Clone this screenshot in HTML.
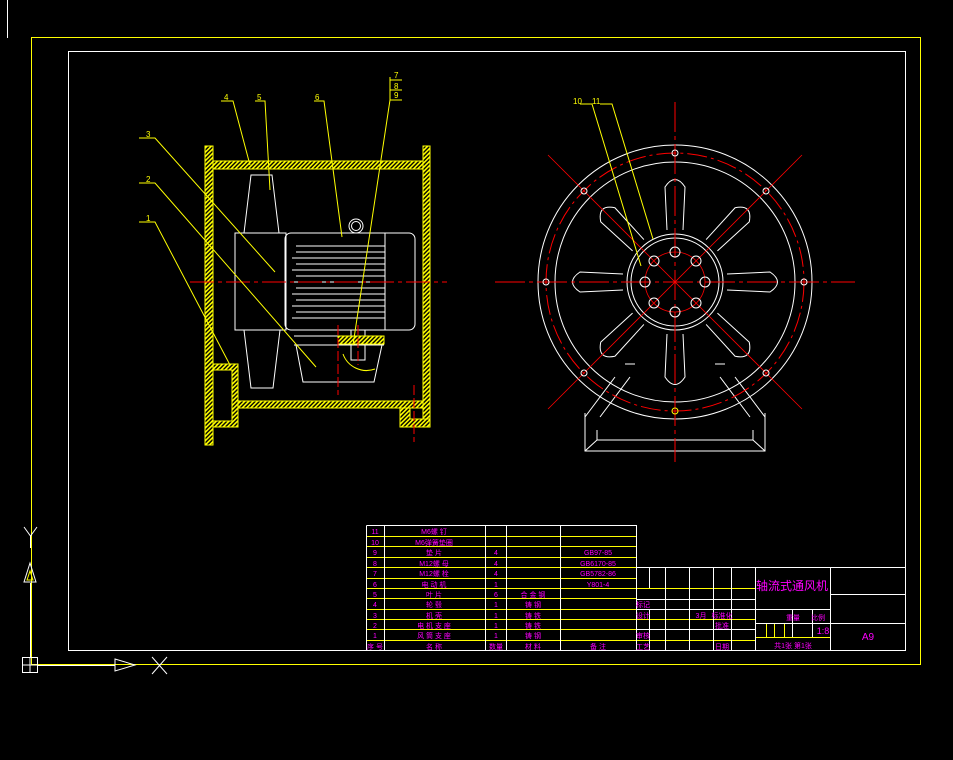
<!DOCTYPE html>
<html><head><meta charset="utf-8"><style>
html,body{margin:0;padding:0;background:#000;}
svg{display:block}
text{font-family:"Liberation Sans","Noto Sans CJK SC",sans-serif;}
</style></head><body>
<svg width="953" height="760" viewBox="0 0 953 760" xmlns="http://www.w3.org/2000/svg">
<defs>
<pattern id="h" width="3" height="3" patternUnits="userSpaceOnUse" patternTransform="rotate(45)">
<rect width="3" height="3" fill="#000"/><rect width="1.6" height="3" fill="#ff0"/></pattern>
</defs>
<rect width="953" height="760" fill="#000"/>
<line x1="7.5" y1="0" x2="7.5" y2="38" stroke="#fff"/>
<rect x="31.5" y="37.5" width="889" height="627" fill="none" stroke="#ff0"/>
<rect x="68.5" y="51.5" width="837" height="599" fill="none" stroke="#fff"/>

<!-- UCS icon -->
<g stroke="#fff" fill="none">
<rect x="22.5" y="657.5" width="15" height="15"/><line x1="30" y1="657" x2="30" y2="672"/><line x1="22" y1="665" x2="37" y2="665"/>
<line x1="37" y1="665.5" x2="115" y2="665.5"/>
<path d="M115 659 L135 665 L115 671 Z"/>
<line x1="30.5" y1="657" x2="30.5" y2="583"/>
<path d="M24 582 L30 563 L36 582 Z"/>
<line x1="152" y1="657" x2="167" y2="674"/><line x1="167" y1="657" x2="152" y2="674"/>
<path d="M24 527 L30.5 536 L37 527 M30.5 536 V548"/>
</g>
<g stroke="#ff0" fill="none"><path d="M27 580 L30 571 L33 580 Z"/></g>

<!-- LEFT VIEW -->
<g>
<rect x="205" y="146" width="8" height="299" fill="url(#h)" stroke="#ff0"/>
<rect x="213" y="161" width="210" height="8" fill="url(#h)" stroke="#ff0"/>
<rect x="423" y="146" width="7" height="281" fill="url(#h)" stroke="#ff0"/>
<rect x="238" y="401" width="185" height="7" fill="url(#h)" stroke="#ff0"/>
<path d="M213 364 H238 V427 H213 V421 H232 V370 H213 Z" fill="url(#h)" stroke="#ff0"/>
<path d="M400 408 H410 V419 H430 V427 H400 Z" fill="url(#h)" stroke="#ff0"/>
<g stroke="#fff" fill="none" stroke-width="1">
<path d="M251 175 H272 L279 233 H244 Z"/>
<path d="M244 330 H280 L273 388 H251 Z"/>
<rect x="235" y="233" width="51" height="97"/>
<rect x="285" y="233" width="130" height="97" rx="6"/>
<line x1="385" y1="233" x2="385" y2="330"/>
<circle cx="356" cy="226" r="7"/><circle cx="356" cy="226" r="4.5"/>
<path d="M296 246 H385 M296 252 H385 M292 258 H385 M296 264 H385 M292 270 H385 M296 276 H385 M292 282 H385 M296 288 H385 M292 294 H385 M296 300 H385 M292 306 H385 M296 312 H385 M292 318 H385"/>
<path d="M294 336 H384 M294 345 H384 M296 345 L303 382 H374 L382 345"/>
<rect x="351" y="330" width="14" height="30"/>
<path d="M343 354 A25 25 0 0 0 375 369" stroke="#ff0"/>
</g>
<rect x="338" y="336" width="46" height="8" fill="url(#h)" stroke="#ff0"/>
<line x1="190" y1="282" x2="447" y2="282" stroke="#f00" stroke-dasharray="24 4 4 4"/>
<line x1="338" y1="325" x2="338" y2="395" stroke="#f00" stroke-dasharray="10 3"/>
<line x1="358" y1="325" x2="358" y2="365" stroke="#f00" stroke-dasharray="10 3"/>
<line x1="414" y1="385" x2="414" y2="442" stroke="#f00" stroke-dasharray="10 3"/>
<!-- leaders -->
<g stroke="#ff0" fill="none">
<path d="M139 222 H155 L230 365"/>
<path d="M139 183 H155 L316 367"/>
<path d="M139 138 H155 L275 272"/>
<path d="M221 101 H233 L250 165"/>
<path d="M255 101 H265 L270 190"/>
<path d="M314 101 H324 L342 237"/>
<path d="M390 77 V100 L353 345 M390 80 H402 M390 90 H402 M390 100 H402"/>
</g>
<g fill="#ff0" font-size="8">
<text x="146" y="221">1</text><text x="146" y="182">2</text><text x="146" y="137">3</text>
<text x="224" y="100">4</text><text x="257" y="100">5</text><text x="315" y="100">6</text>
<text x="394" y="78">7</text><text x="394" y="89">8</text><text x="394" y="98">9</text>
<text x="573" y="104">10</text><text x="592" y="104">11</text>
</g>
</g>

<!-- RIGHT VIEW -->
<g transform="translate(675,282)">
<g stroke="#fff" fill="none">
<path d="M-130 163 V201 H50 V163 M-118 180 V190 H38 V180 M-130 201 L-118 190 M50 201 L38 190" transform="translate(40,-32)"/>
<path d="M-60 95 L-90 135 M-45 95 L-75 135 M60 95 L90 135 M45 95 L75 135 M-50 82 H-40 M40 82 H50"/>
<circle r="137"/><circle r="120"/>
<circle r="48"/><circle r="44"/>
</g>
<circle r="129" stroke="#f00" fill="none" stroke-dasharray="20 4 3 4"/>
<g id="bl" stroke="#fff" fill="none"><path d="M-8 -52 L-10 -95 Q0 -110 10 -95 L8 -52"/></g>
<use href="#bl" transform="rotate(45)"/><use href="#bl" transform="rotate(90)"/><use href="#bl" transform="rotate(135)"/>
<use href="#bl" transform="rotate(180)"/><use href="#bl" transform="rotate(225)"/><use href="#bl" transform="rotate(270)"/><use href="#bl" transform="rotate(315)"/>
<g stroke="#f00">
<line x1="-180" y1="0" x2="180" y2="0" stroke-dasharray="30 4 4 4"/>
<line x1="0" y1="-180" x2="0" y2="180" stroke-dasharray="30 4 4 4"/>
<line x1="-127" y1="-127" x2="127" y2="127" stroke-width="0.8"/>
<line x1="127" y1="-127" x2="-127" y2="127" stroke-width="0.8"/>
<circle r="30" fill="none" stroke-width="0.8"/>
</g>
<g stroke="#fff" fill="none">
<circle cx="0" cy="-30" r="5"/><circle cx="0" cy="30" r="5"/><circle cx="-30" cy="0" r="5"/><circle cx="30" cy="0" r="5"/>
<circle cx="-21" cy="-21" r="5"/><circle cx="21" cy="-21" r="5"/><circle cx="-21" cy="21" r="5"/><circle cx="21" cy="21" r="5"/>
<circle cx="0" cy="-129" r="3"/><circle cx="0" cy="129" r="3" stroke="#ff0"/><circle cx="-129" cy="0" r="3"/><circle cx="129" cy="0" r="3"/>
<circle cx="-91" cy="-91" r="3"/><circle cx="91" cy="-91" r="3"/><circle cx="-91" cy="91" r="3"/><circle cx="91" cy="91" r="3"/>
</g>
<g stroke="#ff0" fill="none"><path d="M-95 -178 H-83 L-34 -16 M-75 -178 H-63 L-22 -43"/></g>
</g>

<!-- PARTS TABLE -->
<g stroke="#ff0">
<line x1="366" y1="536.5" x2="636" y2="536.5"/><line x1="366" y1="546.5" x2="636" y2="546.5"/>
<line x1="366" y1="557.5" x2="636" y2="557.5"/><line x1="366" y1="567.5" x2="636" y2="567.5"/>
<line x1="366" y1="578.5" x2="636" y2="578.5"/><line x1="366" y1="588.5" x2="755" y2="588.5"/>
<line x1="366" y1="598.5" x2="636" y2="598.5"/><line x1="366" y1="609.5" x2="636" y2="609.5"/>
<line x1="366" y1="619.5" x2="755" y2="619.5"/><line x1="366" y1="629.5" x2="636" y2="629.5"/>
<line x1="366" y1="640.5" x2="755" y2="640.5"/><line x1="755" y1="637.5" x2="830" y2="637.5"/>
<line x1="766.5" y1="623" x2="766.5" y2="637"/><line x1="774.5" y1="623" x2="774.5" y2="637"/><line x1="784.5" y1="623" x2="784.5" y2="637"/>
</g>
<g stroke="#fff" fill="none">
<path d="M366.5 525.5 H636.5 V650 M366.5 525.5 V650 M384.5 525 V650 M485.5 525 V650 M506.5 525 V650 M560.5 525 V650"/>
<path d="M636 567.5 H906 M649.5 567 V588 M665.5 567 V650 M689.5 567 V650 M713.5 567 V650 M731.5 567 V650 M755.5 567 V650 M830.5 567 V650"/>
<path d="M636 599.5 H755 M636 609.5 H755 M636 629.5 H755 M649.5 609 V650 M830 594.5 H906 M755 609.5 H830 M755 623.5 H906 M792.5 609 V637 M812.5 609 V637"/>
</g>
<g fill="#f0f" font-size="7" text-anchor="middle">
<text x="375" y="534">11</text><text x="375" y="545">10</text><text x="375" y="555">9</text><text x="375" y="566">8</text>
<text x="375" y="576">7</text><text x="375" y="587">6</text><text x="375" y="597">5</text><text x="375" y="607">4</text>
<text x="375" y="618">3</text><text x="375" y="628">2</text><text x="375" y="638">1</text><text x="375" y="649">序 号</text>
<text x="434" y="534">M6螺 钉</text><text x="434" y="545">M6弹簧垫圈</text><text x="434" y="555">垫 片</text><text x="434" y="566">M12螺 母</text>
<text x="434" y="576">M12螺 栓</text><text x="434" y="587">电 动 机</text><text x="434" y="597">叶 片</text><text x="434" y="607">轮 毂</text>
<text x="434" y="618">机 壳</text><text x="434" y="628">电 机 支 座</text><text x="434" y="638">风 筒 支 座</text><text x="434" y="649">名 称</text>
<text x="496" y="555">4</text><text x="496" y="566">4</text><text x="496" y="576">4</text><text x="496" y="587">1</text>
<text x="496" y="597">6</text><text x="496" y="607">1</text><text x="496" y="618">1</text><text x="496" y="628">1</text><text x="496" y="638">1</text><text x="496" y="649">数量</text>
<text x="533" y="597">合 金 钢</text><text x="533" y="607">铸 钢</text><text x="533" y="618">铸 铁</text><text x="533" y="628">铸 铁</text><text x="533" y="638">铸 钢</text><text x="533" y="649">材 料</text>
<text x="598" y="555">GB97-85</text><text x="598" y="566">GB6170-85</text><text x="598" y="576">GB5782-86</text><text x="598" y="587">Y801-4</text>
<text x="598" y="649">备 注</text>
<text x="643" y="607">标记</text><text x="643" y="618">设计</text><text x="643" y="638">审核</text><text x="643" y="649">工艺</text>
<text x="701" y="618">3月</text><text x="722" y="618">标准化</text><text x="722" y="628">批准</text><text x="722" y="649">日期</text>
<text x="793" y="620">重量</text><text x="818" y="620">比例</text>
<text x="793" y="648">共1张 第1张</text>
<text x="823" y="634" font-size="9">1:8</text>
<text x="868" y="640" font-size="10">A9</text>
<text x="792" y="590" font-size="12">轴流式通风机</text>
</g>
</svg>
</body></html>
